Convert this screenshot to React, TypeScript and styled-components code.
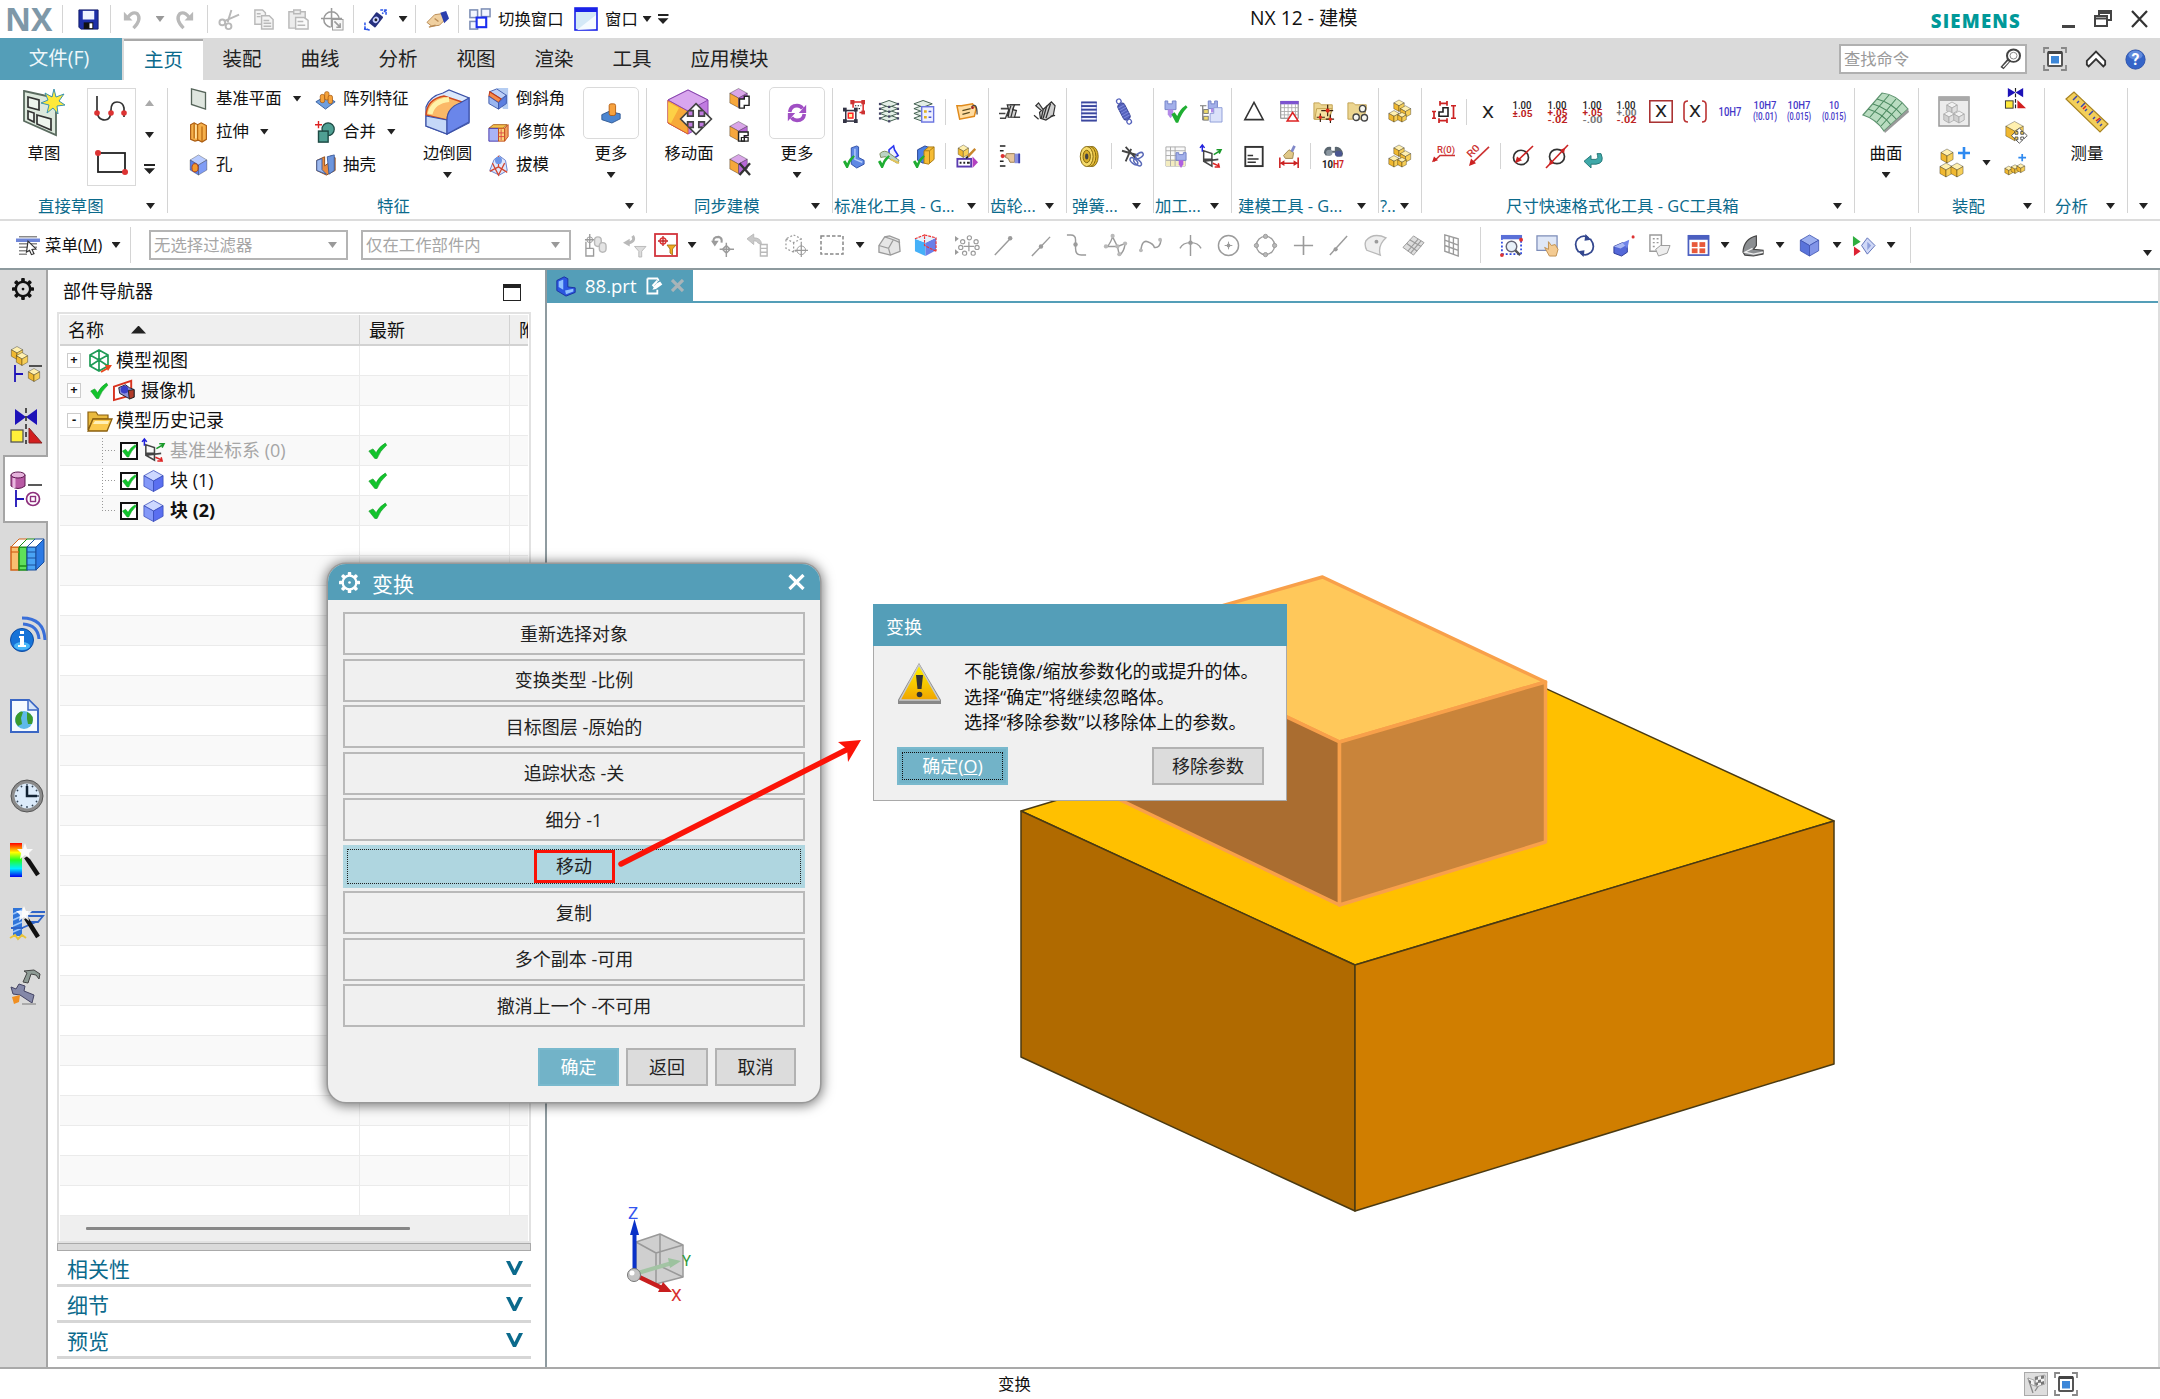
import React from 'react';
import styled, { createGlobalStyle, css } from 'styled-components';

const TEAL = '#549eb8';
const LINK = '#0b6a8c';

const Global = createGlobalStyle`
  * { box-sizing: border-box; }
  body { margin: 0; background: #fff; overflow: hidden; }
  svg { display: block; flex: none; }
  svg text { font-family: "Roboto", "Open Sans", sans-serif; }
`;

/* ---------- icon drawings ---------- */

const BLUE = ['#b9ccff', '#5b7fe8', '#7f9cf5'];
const GOLD = ['#fff0b0', '#f0b830', '#f7cf58'];
const PINK = ['#d9a6e8', '#f6a73c', '#b768d6'];
const GRAY = ['#f1f1f1', '#d0d0d0', '#e0e0e0'];
const cube = (cx: number, cy: number, r: number, c: string[], edge = '#00000066') => {
  const a = 0.87 * r;
  const b = r / 2;
  return (
    <g stroke={edge} strokeWidth={0.8} strokeLinejoin="round">
      <polygon fill={c[0]} points={`${cx},${cy - r} ${cx + a},${cy - b} ${cx},${cy} ${cx - a},${cy - b}`} />
      <polygon fill={c[1]} points={`${cx - a},${cy - b} ${cx},${cy} ${cx},${cy + r} ${cx - a},${cy + b}`} />
      <polygon fill={c[2]} points={`${cx + a},${cy - b} ${cx},${cy} ${cx},${cy + r} ${cx + a},${cy + b}`} />
    </g>
  );
};
const L = (d: string, stroke = '#222', w = 1.6, fill = 'none', extra: object = {}) => (
  <path d={d} stroke={stroke} strokeWidth={w} fill={fill} {...extra} />
);
const dot = (x: number, y: number, r = 2, f = '#d33') => <circle cx={x} cy={y} r={r} fill={f} />;
const tick = (x: number, y: number, s = 1) => (
  <path
    transform={`translate(${x} ${y}) scale(${s})`}
    d="M0 9 L3.5 7 L6.5 11 Q9 4 16 -0.500 L18 1.500 Q11 8 7.500 18 L5 18 Z"
    fill="#1fae32"
  />
);
const T = (x: number, y: number, s: number, fill: string, t: string, len?: number, weight = 500) => (
  <text x={x} y={y} fontSize={s} fill={fill} textAnchor="middle" fontWeight={weight} textLength={len} lengthAdjust="spacingAndGlyphs">
    {t}
  </text>
);
const moveCross = (x: number, y: number, s: number, f = '#fff') => (
  <path
    transform={`translate(${x} ${y}) scale(${s})`}
    d="M0 -11 L5 -6 H2 V-2 H6 V-5 L11 0 L6 5 V2 H2 V6 H5 L0 11 L-5 6 H-2 V2 H-6 V5 L-11 0 L-6 -5 V-2 H-2 V-6 H-5 Z"
    fill={f}
    stroke="#444"
    strokeWidth={1.2}
  />
);
const G = '#9b9b9b';
const LG = '#b9b9b9';
const tol = (a: string, ac: string, b?: string, bc = '#b22') => (
  <>
    {T(12, 9, 11, '#222', '1.00', 19)}
    {T(12.5, b ? 17 : 18, 9, ac, a, 20, 700)}
    {b && T(12.5, 24.5, 9, bc, b, 20, 700)}
  </>
);
const fit = (a: string, b: string) => (
  <>
    {T(12, 9, 12, '#4437c8', a, a.length > 2 ? 23 : 10)}
    {T(12, 21, 11, '#4437c8', b, 24)}
  </>
);

const icons: Record<string, React.ReactNode> = {
  save: (<><path d="M2 2h20v20H4L2 20z" fill="#1d2fa8" stroke="#111a66" /><rect x="6" y="3" width="12" height="9" fill="#eef3ff" /><rect x="7" y="15" width="10" height="7" fill="#111" /><rect x="13" y="16" width="3" height="5" fill="#fff" /></>),
  undo: (<>{L('M7 10Q12 3 17 6Q22 12 13 21', LG, 3.4)}<path d="M3 4v9h9z" fill={LG} /></>),
  redo: (<>{L('M17 10Q12 3 7 6Q2 12 11 21', LG, 3.4)}<path d="M21 4v9h-9z" fill={LG} /></>),
  cut: (<>{L('M14 2 L10 15 M22 7 L6 14', LG, 2)}<circle cx="4.500" cy="15" r="3" fill="none" stroke={LG} strokeWidth="2" /><circle cx="11" cy="19" r="3" fill="none" stroke={LG} strokeWidth="2" /></>),
  copy: (<g fill="#f4f4f4" stroke={LG} strokeWidth="1.500"><path d="M3 2h8l3 3v12H3z" /><path d="M10 8h8l4 4v10H10z" /><path d="M12 13h6M12 16h8M12 19h8M5 6h4M5 9h4" /></g>),
  paste: (<g fill="#ececec" stroke={LG} strokeWidth="1.500"><path d="M2 4h17v17H2z" /><path d="M7 2h7v4H7z" /><path d="M9 10h9l4 3v9H9z" fill="#fafafa" /><path d="M11 14h6M11 18h8" /></g>),
  movebox: (<>{L('M3 12a8 8 0 1 1 16 0M3 12a8 8 0 0 0 7 8M11 0v20M0 11h22', G, 1.6)}<rect x="12" y="12" width="11" height="11" fill="#f6f6f6" stroke={G} />{L('M14 14l6 6M20 16v4h-4', G, 1.6)}</>),
  sync: (<><g transform="rotate(38 12 12)"><rect x="8" y="5" width="9" height="14" rx="1" fill="#26307e" /><ellipse cx="12.500" cy="12" rx="3" ry="3.500" fill="#c9d0ff" /><circle cx="12.500" cy="12" r="1.500" fill="#222" /></g>{L('M1 15v6l4 2M0 22l6 1M17 2l6 0v6M23 2l-4 4', '#2b55e8', 1.6, 'none', { strokeDasharray: '3 1' })}</>),
  hand: (<><path d="M1 15l8-8 7-1 4 6-6 6-8 1z" fill="#f0d0a0" stroke="#b98b55" /><path d="M15 5l6-2 3 8-5 5z" fill="#2b3fae" />{L('M3 20l7-2M9 11l4 3', '#b98b55', 1.4)}</>),
  switchw: (<><g fill="#f2f6ff" stroke="#7d8eb5" strokeWidth="1.600"><rect x="2" y="2" width="8" height="8" /><rect x="14" y="1" width="9" height="8" /><rect x="2" y="14" width="8" height="8" /></g><rect x="9" y="10" width="10" height="10" fill="#fff" stroke="#1a2ef0" strokeWidth="2.200" /></>),
  windoww: (<><rect x="1" y="1" width="22" height="22" fill="#d4e9f7" stroke="#1a22e8" strokeWidth="1.600" /><rect x="1" y="1" width="22" height="4" fill="#1a22e8" /><path d="M3 23L22 8v14z" fill="#f5fbff" /></>),
  search: (<><circle cx="14.500" cy="8" r="6.500" fill="none" stroke="#444" strokeWidth="2" /><circle cx="14.500" cy="8" r="3.500" fill="none" stroke="#888" />{L('M10.500 12L3 21', '#444', 4)}{L('M9.500 14L4 20', '#fff', 1.4)}</>),
  full: (<>{L('M1 6V1h5M18 1h5v5M23 18v5h-5M6 23H1v-5', '#888', 1.8)}<rect x="5" y="5" width="14" height="14" rx="1" fill="#fff" stroke="#555" strokeWidth="2" /><path d="M5 5.500h14" stroke="#444" strokeWidth="3" /><rect x="8" y="9" width="8" height="7.500" fill="#3d87d8" /></>),
  up: (<path d="M2 14L12 4l10 10v4l-2 2-8-8-8 8-2-2z" fill="#fff" stroke="#333" strokeWidth="2" />),
  help: (<><circle cx="12" cy="12" r="11" fill="#3565c8" stroke="#2a4fa8" /><ellipse cx="12" cy="7" rx="8" ry="5" fill="#7fa3ea" opacity=".6" />{T(12, 18.5, 18, '#fff', '?', undefined, 700)}</>),
  sketch: (<><path d="M2 2L34 9V46L2 32z" fill="#dde9dd" stroke="#5a6b5f" strokeWidth="1.800" /><path d="M6 8l11 3v10L6 18zM6 22l6 2v9l-6-3zM15 26l14 4v11l-14-6z" fill="#eef5ee" stroke="#333" strokeWidth="1.700" /><path d="M32 0l2 8 8-3-5 7 6 4-8 1 1 8-5-6-6 5 2-8-8-2 7-3-3-7 7 4z" fill="#ffe93a" stroke="#3b93b0" strokeWidth="1" /></>),
  curveS: (<>{L('M2 1v14q0 10 8 10q6 0 6-10q0-8 6-8q6 0 7 6v9', '#333', 1.7)}{dot(2, 18, 2.8)}{dot(16, 18, 2.8)}{dot(29, 18, 2.8)}</>),
  rectS: (<><rect x="3" y="3" width="27" height="19" fill="none" stroke="#222" strokeWidth="1.800" />{dot(3, 3, 3)}{dot(30, 22, 3)}</>),
  plane: (<path d="M4 1L20 5V23L4 18z" fill="#dfe6df" stroke="#56655a" strokeWidth="1.500" />),
  extrude: (<><path d="M3 4l4-2 4 2 4-2 6 3v15l-5 3-4-2-4 1-5-2z" fill="#f6b04a" stroke="#a85a12" strokeWidth="1.300" />{L('M7 2v17M11 4v17M16 6v17', '#b8680f', 1.4)}{L('M9 4v15', '#ffe1a0', 2)}</>),
  hole: (<>{cube(12, 12, 11, BLUE)}<ellipse cx="8" cy="15" rx="3.500" ry="4.500" fill="#f39a2e" stroke="#b03a10" /></>),
  pattern: (<><path d="M1 15l11-6 11 6-11 8z" fill="#6f9fe0" stroke="#2f5a9c" />{[[6, 7], [11, 4], [15, 8]].map(([x, y], i) => (<rect key={i} x={x} y={y} width="5" height="9" rx="2" fill="#f5a23a" stroke="#a5570e" strokeWidth=".8" />))}</>),
  unite: (<>{L('M4 0v8M0 4h8', '#d22', 1.6)}<circle cx="15" cy="9" r="7" fill="#4f9f93" stroke="#1d4a44" strokeWidth="1.400" /><rect x="4" y="11" width="11" height="12" fill="#4f9f93" stroke="#1d4a44" strokeWidth="1.600" /></>),
  shell: (<><path d="M2 7l9-4v10l7-5V2l5 2v14l-10 5-11-5z" fill="#e98a3c" stroke="#8a4512" /><path d="M14 3l8-2v17l-6 4z" fill="#6d95dc" stroke="#38599c" /><path d="M2 7l6-2v12l5 5-11-4z" fill="#9eb9ee" stroke="#38599c" /></>),
  edgeblend: (<><path d="M1 18Q5 7 18 4L24 1L44 9V34L22 45L1 37z" fill="#dbe8fc" stroke="#3c52a8" strokeWidth="1.200" /><path d="M1 26Q2 10 19 7L40 14Q23 17 22 31z" fill="#fbb968" stroke="#d04a1e" strokeWidth="1.500" /><path d="M5 25Q8 12 24 10.500" stroke="#fff3a8" strokeWidth="5" fill="none" /><path d="M1 27L22 31V45L1 37z" fill="#c5d8f8" stroke="#3c52a8" strokeWidth="1.200" /><path d="M22 31Q22 19 35 14L44 9V33L22 45z" fill="#6a86ea" stroke="#3c52a8" strokeWidth="1.200" /></>),
  chamfer: (<><path d="M10 0h13v23h-6z" fill="#b5cdf2" /><path d="M2 4L10 1L21 8L15 12z" fill="#bcd0f8" stroke="#3a55a8" /><path d="M2 4l13 8-3 4L1 9z" fill="#f68b4a" stroke="#c03a18" strokeWidth="1.200" /><path d="M1 9l11 7v7L1 17z" fill="#9bb6f0" stroke="#3a55a8" /><path d="M12 16l9-8v9l-9 6z" fill="#5c7fe0" stroke="#3a55a8" /></>),
  trim: (<><path d="M1 8l5-4h16l-5 4z" fill="#f4c24c" stroke="#a85a12" /><path d="M1 8h11v14H1z" fill="#a9b4f5" stroke="#3d2ea8" /><path d="M12 8h7v14h-7z" fill="#fbd57a" stroke="#c04a18" /><path d="M19 8l4-4v13l-4 5z" fill="#f0a060" stroke="#c04a18" />{L('M15 9v12M12 13h7M12 17h7', '#d44', 1)}</>),
  draft: (<><path d="M7 6l6-4 7 5 2 11-9 5-11-5z" fill="#dfe7fb" stroke="#5c76c8" />{L('M12 2v12M12 14L2 19M12 14l10 6M5 10l7 13 7-13', '#d2452e', 1.4)}<circle cx="12" cy="7" r="4" fill="#6d95e8" /></>),
  moreA: (<><path d="M2 14l8-4 12 3v6l-9 5-11-4z" fill="#4d86d0" stroke="#2b5590" /><rect x="10" y="1" width="7" height="14" rx="2" fill="#f7a23e" stroke="#b35c10" /></>),
  moveface: (<><path d="M21 1L41 11V34L21 45L1 34V11z" fill="#c07be0" stroke="#8a48b0" /><path d="M1 11L21 22V45L1 34z" fill="#f7a93a" stroke="#e0602a" /><path d="M1 13L12 19L4 34L1 33z" fill="#ffe14c" opacity=".7" /><path d="M21 1L41 11L21 22L1 11z" fill="#d9a6ee" stroke="#8a48b0" />{moveCross(29, 30, 1.4)}</>),
  pullface: (<>{cube(11, 11, 10.5, PINK)}<path d="M12 12h5v-3h5v10h-5v3h-5z" fill="#fff" stroke="#222" strokeWidth="1.500" /></>),
  offsetface: (<>{cube(11, 11, 10.5, PINK)}<path d="M11 12h10v4h-4v6h-6z" fill="#fff" stroke="#222" strokeWidth="1.500" />{L('M14 18h7v4h-7z', '#222', 1.3)}</>),
  delface: (<>{cube(11, 11, 10.5, PINK)}{L('M12 10l11 13M23 10L12 23', '#333', 2.4)}</>),
  cycle: (<>{L('M4 11Q5 4 12 4q4 0 6 3M20 13q-1 7-8 7-4 0-6-3', '#a04fc4', 4)}<path d="M22 3v9h-8zM2 21v-9h8z" fill="#a04fc4" /></>),
  attr: (<><path d="M11 2h11v11h-4M11 2v6" fill="none" stroke="#d22" strokeWidth="1.600" />{L('M13 6h7M14 9h6', '#222', 1.3, 'none', { strokeDasharray: '1.500 1.500' })}<rect x="3" y="11" width="11" height="11" fill="#fff" stroke="#334" strokeWidth="1.600" />{[[0, 8], [0, 20], [12, 20], [12, 8]].map(([x, y], i) => (<rect key={i} x={x} y={y} width="4" height="4" fill="#334" />))}<rect x="8" y="0" width="4.500" height="4.500" fill="#c33" /><rect x="20" y="0" width="4" height="4.500" fill="#c33" /><rect x="20" y="11" width="4" height="4" fill="#c33" /><rect x="5.800" y="13.800" width="5" height="5" fill="#fff3a0" stroke="#f22" strokeWidth="1.600" /></>),
  layers: (<g fill="#e3eee6" stroke="#3c5a4a" strokeWidth="1">{[18, 13, 8, 3].map((y) => (<g key={y}><path d={`M2 ${y + 1}L12 ${y - 2.5}L22 ${y + 1}L12 ${y + 4.5}z`} /><g fill="#446" stroke="none"><rect x="1" y={y} width="2.400" height="2.400" /><rect x="20.600" y={y} width="2.400" height="2.400" /><rect x="11" y={y + 3} width="2.400" height="2.400" /></g></g>))}</g>),
  layers2: (<><g fill="#e3eee6" stroke="#3c5a4a" strokeWidth="1">{[18, 13, 8, 3].map((y) => (<path key={y} d={`M1 ${y + 1}L11 ${y - 2.5}L21 ${y + 1}L11 ${y + 4.5}z`} />))}</g><rect x="9.500" y="7" width="13" height="16" fill="#eef0ff" stroke="#6a74e0" strokeWidth="1.500" />{L('M12 12h3M12 18h3', '#e0b020', 2.600)}{L('M17 12h3M17 18h3', '#4a57d0', 1.500)}</>),
  tag: (<><path d="M1 6l5 0 12-2 4 5-2 8-16 3z" fill="#ffdca0" stroke="#e08a1c" strokeWidth="1.600" />{L('M7 11l9-2M7 15l8-2', '#5a4a20', 1.4)}{L('M17 7q6-5 6 8', '#444', 1.4)}{dot(18, 8, 1.5, '#a22')}</>),
  okA: (<><path d="M9 3l6-2 2 1v11l6 3v4l-8 4-6-4z" fill="#5f88e4" stroke="#2f4fa8" /><path d="M13 4v11l8 3" stroke="#b9cffa" fill="none" strokeWidth="1.500" />{tick(0, 11, 0.72)}</>),
  okB: (<><path d="M12 5l5-4 1 4 4 6-5 3-5-4z" fill="#f0f2ff" stroke="#2a36f0" strokeWidth="1.700" /><path d="M2 9q5-5 11 0l10 7-2 3-9-5q-4-3-9-1z" fill="#bcd3c4" stroke="#7a8a5a" />{L('M14 15l9 4', '#e4c45a', 2)}{tick(0, 11, 0.72)}</>),
  okC: (<><path d="M5 5l8-4 6 2v12l-8 4-6-3z" fill="#4a80e4" stroke="#25408f" /><path d="M12 6l5-4h6v13l-6 5-5-1z" fill="#f6bc34" stroke="#a87a14" /><path d="M12 6h6v13M18 6l5-4" fill="none" stroke="#a87a14" />{tick(0, 11, 0.72)}</>),
  okD: (<>{cube(8, 6.5, 6.5, GOLD)}<rect x="1.500" y="14.500" width="15" height="8" fill="#fff" stroke="#5a3bb0" strokeWidth="2" />{L('M4 18.500h2M8 18.500h2M12 18.500h3', '#222', 2)}<path d="M18 12l6 6-6 6z" fill="#b33fc0" />{L('M13 12l8-8', '#c8862a', 2.600)}{L('M11 14l2-2', '#222', 2)}</>),
  gearA: (<>{L('M0 14h7M12 5l11 0M2 9h9M16 18h7M1 19l6 0 6-14', '#444', 1.6)}<path d="M9 5h8l-2 5 4 1-2 7h-7l1-6z" fill="#d2d2d2" stroke="#333" strokeWidth="1.300" />{L('M13 6l-4 11M16 7l-3 11', '#333', 1.300)}</>),
  gearB: (<><path d="M2 6l3-3 5 7 9-8 4 4-2 10-8 5-6-2-1-6 2-2z" fill="#cfcfcf" stroke="#333" strokeWidth="1.300" />{L('M10 10l-2 9M14 6l-4 13M18 4l-5 15M0 16l5 4M18 17l5-1', '#333', 1.400)}</>),
  gearC: (<>{L('M1 1h6M1 6h4M1 17h4M1 22h6', '#222', 1.6)}{L('M2 11.500h6', '#c66', 1.500)}{dot(4, 11.5, 2.2)}<path d="M8 9h9v9h-5l-2-4-3-1z" fill="#e8c69c" stroke="#9a7a4c" /><path d="M17 9h6v10h-6z" fill="#8a92e0" />{L('M22 9v10', '#3b3fae', 2)}</>),
  spring: (<><rect x="4" y="2" width="16" height="20" fill="#f3f4ff" />{L('M4 2v20M20 2v20', '#8d96d8', 1.2)}<g stroke="#3b479e" strokeWidth="2">{[2.5, 6.3, 10.1, 13.9, 17.7, 21.5].map((y) => (<path key={y} d={`M3.500 ${y}h17`} />))}</g></>),
  spring2: (<><g transform="rotate(-28 12 12)"><rect x="8" y="3" width="8" height="18" rx="3" fill="#5562bc" stroke="#333f90" />{L('M8 6h8M8 9h8M8 12h8M8 15h8M8 18h8', '#7d89dc', 1)}<circle cx="12" cy="0" r="2.500" fill="none" stroke="#5562bc" strokeWidth="1.400" /><circle cx="12" cy="24" r="2.500" fill="none" stroke="#5562bc" strokeWidth="1.400" /></g></>),
  disc: (<><ellipse cx="15.500" cy="12" rx="6.500" ry="10.500" fill="#dfb42a" stroke="#7d620c" /><ellipse cx="12.500" cy="12" rx="7" ry="10.500" fill="#ecc545" stroke="#7d620c" /><ellipse cx="9.500" cy="12" rx="7" ry="10.500" fill="#f6da68" stroke="#7d620c" /><ellipse cx="9.500" cy="12" rx="4" ry="6.500" fill="#d7ad2a" stroke="#7d620c" /><ellipse cx="9.500" cy="12" rx="1.800" ry="3.200" fill="#444" /></>),
  springcut: (<>{L('M4 2l12 13M0 6l18 5M10 4L4 17', '#444', 2)}<g fill="none" stroke="#5a6ab8" strokeWidth="1.600"><ellipse cx="19" cy="11" rx="4.500" ry="2.500" transform="rotate(-30 19 11)" /><ellipse cx="17" cy="18" rx="2.500" ry="5" transform="rotate(-50 17 18)" /><ellipse cx="13" cy="17" rx="2.500" ry="5" transform="rotate(-50 13 17)" /></g></>),
  mach: (<><path d="M0 1h3v3h5V1h4v9H0z" fill="#a3b0ea" stroke="#7483c8" /><path d="M3 10h6v5l-3 4-3-4z" fill="#b48ae8" />{tick(7, 6, 0.98)}</>),
  mach2: (<><path d="M9 1h3v3h4V1h3v8H9z" fill="#a3b0ea" stroke="#7483c8" /><path d="M12 9h5v4h-5z" fill="#b48ae8" /><path d="M15 8h9v15H11V14h4z" fill="#dbe2fa" stroke="#8d9cd8" />{L('M0 6h7M3 6v15M3 20h4', '#777', 1.3)}<rect x="4" y="10" width="5" height="4" fill="#f0dc6a" stroke="#777" /><rect x="4" y="17" width="5" height="4" fill="#f0dc6a" stroke="#777" /></>),
  mach3: (<><path d="M1 2h21v20H1z" fill="#fafafa" stroke="#aaa" /><path d="M1 15h21v7H1z" fill="#f3ecc0" />{L('M1 6h21M1 11h21M1 16h21M6 2v20M11 2v20', '#aaa', 1)}<path d="M12 8h3v2h5V8h3v8H12z" fill="#a3b0ea" stroke="#7483c8" /><path d="M15 16h5v4l-2.500 4-2.500-4z" fill="#b060e0" /></>),
  csys: (<>{L('M4 6v11l9 5V9zM13 15l-9 0M4 17l16-2', '#444', 1.6)}{L('M2.500 7V1M0 3l2.500-3 2.500 3', '#22d', 1.6)}{L('M15 10l7-4M18 5h5l-2 4', '#1a9a2a', 1.6)}{L('M14 19l7 3M20 19l1 4h-5', '#d22', 1.6)}</>),
  tri: L('M12 2.500L22 20.500H2z', '#333', 1.7),
  sheet: (<><rect x="3" y="1.500" width="19" height="17.500" fill="#fff" stroke="#777" /><rect x="2.500" y="1" width="20" height="3.500" fill="#7b52d0" />{L('M3 8h19M3 12h19M3 15.500h19M7 4v15M11 4v15M15 4v15M19 4v15', '#aaa', 0.9)}<path d="M16 13l6 9H10z" fill="#fff" stroke="#d22" strokeWidth="1.600" /></>),
  folderA: (<><path d="M1 3h6l2 2h12v4l-3 11H1z" fill="#ecd590" stroke="#c0a050" /><path d="M4 9h17l-4 11H2z" fill="#f6e2a0" stroke="#c0a050" />{L('M16 5v12M9 11h13M8 14v9M4 18h9M19 15v9M14 20h9', '#3a2010', 1.3)}{dot(16, 11, 2.2, '#e02a1a')}{dot(8, 18, 1.8, '#e02a1a')}{dot(19, 20, 1.8, '#e02a1a')}</>),
  folderB: (<><path d="M1 3h6l2 2h12v4l-3 11H1z" fill="#ecd590" stroke="#c0a050" /><g fill="#f6f6f0" stroke="#444" strokeWidth="1.500"><circle cx="17" cy="9" r="3.400" /><circle cx="10" cy="18" r="3.400" /><circle cx="19" cy="18.500" r="3.400" /></g></>),
  note: (<><rect x="2.500" y="2" width="19" height="20" fill="#fff" stroke="#333" strokeWidth="2" />{L('M5 11h6M5 14.500h12M5 18h9', '#333', 1.600)}</>),
  brush: (<>{L('M2 13v11M22 13v11M3 19h18', '#c22', 1.7)}<path d="M2 19l5-3v6zM22 19l-5-3v6z" fill="#c22" /><path d="M6 11l6-6 5 3-1 6-8 0z" fill="#e0c888" stroke="#a08850" />{L('M15 7l3-6', '#8088c8', 3)}</>),
  bino: (<><path d="M2 8q1-7 8-6v4h4V2q7-1 9 7l-1 3h-6l-1-4h-4l-2 3H4z" fill="#5a6670" /><ellipse cx="8" cy="8" rx="3.500" ry="3" fill="#8a96a0" /><ellipse cx="18" cy="9" rx="4" ry="3" fill="#4a5690" />{T(6, 24, 10.5, '#222', '10', 12, 700)}{T(18, 24, 10.5, '#c22', 'H7', 12, 700)}</>),
  cubes: (<>{cube(11, 6, 6, GOLD)}{cube(17.500, 12, 6, GOLD)}{cube(6, 17, 6, GOLD)}{cube(14, 18, 5, GOLD)}</>),
  dimA: (<>{L('M8 1v5M15 1v5M8 3.500h7M7 19v5M15 19v5M7 21.500h8M0 12h4M0 19h4M2 12v7M19 6h5M19 19h5M21.500 6v13', '#c22', 1.7)}{L('M7 17V12.500h4V8h5v9z', '#222', 1.6)}</>),
  x: T(12, 18.500, 18, '#222', 'X', 12, 400),
  xbox: (<><rect x=".8" y=".8" width="22.400" height="22.400" fill="none" stroke="#a33" strokeWidth="1.600" />{T(12, 18, 17.5, '#222', 'X', 12, 400)}</>),
  xpar: (<>{L('M5 1Q1 1 1 5v14q0 4 4 4M19 1q4 0 4 4v14q0 4-4 4', '#b33', 1.6)}{T(12, 18, 17.5, '#222', 'X', 12, 400)}</>),
  t1: tol('±.05', '#b22'),
  t2: tol('+.05', '#b22', '-.02'),
  t3: tol('+.05', '#b22', '-.00', '#777'),
  t4: tol('+.00', '#777', '-.02'),
  h0: T(12, 17, 13, '#4437c8', '10H7', 23),
  h1: fit('10H7', '(!0.01)'),
  h2: fit('10H7', '(0.015)'),
  h3: fit('10', '(0.015)'),
  rA: (<>{T(14, 8, 9.500, '#c33', 'R(0)', 18)}{L('M23 11H8L2 17', '#c33', 1.6)}<path d="M0 18l2-6 4 4z" fill="#c22" /></>),
  rB: (<>{L('M22 2L4 20', '#c33', 1.6)}<path d="M2 22l2-8 5 5z" fill="#c22" /><g transform="rotate(-45 10 10)">{T(10, 8, 10, '#c33', 'R0', 14)}</g></>),
  diaA: (<><circle cx="11" cy="13" r="7.500" fill="none" stroke="#333" strokeWidth="1.700" />{L('M23 1L7 17', '#c22', 1.6)}<path d="M5 19l2-7 5 4z" fill="#c22" /></>),
  diaB: (<><circle cx="12" cy="12" r="7.500" fill="none" stroke="#333" strokeWidth="1.700" />{L('M23 0L1 24', '#c22', 1.6)}<path d="M4 21l1-6 4 4zM20 3l-1 6-4-4z" fill="#c22" /></>),
  enter: (<path d="M4 17l7-6v4h5q3-1 1-6h4q4 10-5 11h-5v4z" fill="#3fa9a9" stroke="#267878" />),
  surface: (<><path d="M1 24L20 2Q34 3 46 18L22 40Q14 28 1 24z" fill="#b9dcc0" stroke="#5f9470" strokeWidth="1.200" />{L('M6 18Q20 22 29 34M11 13Q25 17 35 29M15 8Q30 12 40 24M8 26L27 4M15 31L34 8M19 35L40 12', '#4c8a60', 1.1)}<path d="M46 18L22 40l1 2L47 21z" fill="#999" /></>),
  asmBox: (<><rect x="1" y="1" width="30" height="29" fill="#ececec" stroke="#999" strokeWidth="1.500" /><rect x="1" y="1" width="30" height="4" fill="#a9a9a9" />{cube(14, 12, 6, GRAY, '#aaa')}{cube(11, 21, 6, GRAY, '#aaa')}{cube(21, 21, 6, GRAY, '#aaa')}</>),
  asmAdd: (<>{cube(9, 9, 7, GOLD)}{cube(8, 23, 7, GOLD)}{cube(19, 23, 7, GOLD)}{L('M26 0v12M20 6h12', '#2f8af0', 2.600)}</>),
  mirror: (<><path d="M4 0l8 5-8 5zM20 0l-8 5 8 5z" fill="#1d12b8" />{L('M12 0v24', '#222', 1.2, 'none', { strokeDasharray: '4 2' })}<rect x="1.500" y="14" width="8" height="8" fill="#ffe93a" stroke="#333" /><path d="M14 13l9 9h-9z" fill="#d21f1f" /></>),
  moveComp: (<>{cube(11, 11, 10.500, GOLD)}{moveCross(16, 16, 0.75)}</>),
  patComp: (<>{cube(5, 18, 4.8, GOLD)}{cube(11.500, 16.500, 4.8, GOLD)}{cube(17.500, 15.500, 4.8, GOLD)}{L('M19 0v8M15 4h8', '#2f8af0', 1.800)}</>),
  ruler: (<><path d="M1 8L9 1L43 33L35 41z" fill="#f3cf5a" stroke="#a98422" strokeWidth="1.200" />{L('M8 9l4-4M12 12l2-2M16 16l4-4M20 20l2-2M24 24l4-4M28 28l2-2M32 32l4-4M35 35l2-2', '#3b46b0', 1.500)}{L('M18 18l3-3M31 30l4-3', '#d22', 1.500)}</>),
  menu: (<>{L('M3 2h18M3 10h18M3 14h18M3 18h12M3 22h8', '#8a8a8a', 1.600)}<rect x="0" y="4" width="24" height="4" fill="#6f86d8" /><path d="M12 7l8 9-4 .5 2 5-2.500 1-2-5-3 2z" fill="#fff" stroke="#333" strokeWidth="1.200" /></>),
  gA: (<>{L('M2 8v15h8v-8M2 15h8M6 0v15M1 6h10', G, 1.4)}<circle cx="6" cy="6" r="3" fill="none" stroke={G} /><rect x="11" y="3" width="7" height="10" rx="3.500" fill="#e4e4e4" stroke={LG} strokeWidth="1.500" /><rect x="16" y="9" width="7" height="10" rx="3.500" fill="#e4e4e4" stroke={LG} strokeWidth="1.500" /></>),
  gB: (<>{L('M10 2q4 6-6 8', LG, 3)}<path d="M0 9l7-4v8z" fill={LG} /><path d="M12 13h12l-4.500 5v6h-3v-6z" fill="#ddd" stroke={LG} /></>),
  redfilter: (<><rect x="1" y="1" width="22" height="22" fill="#fff" stroke="#d2343c" strokeWidth="1.800" />{L('M9 3v10M4 8h10', '#b22', 1.300)}<circle cx="9" cy="8" r="3" fill="none" stroke="#d33" strokeWidth="1.400" /><path d="M13 12h9l-3.500 4v6l-2.500-2v-4z" fill="#f0a91f" stroke="#9c6c10" strokeWidth=".8" /></>),
  gC: (<>{L('M3 9Q1 3 8 3q4 1 3 6', G, 2.2)}<path d="M0 7h8l-4 6z" fill={G} />{L('M16 9v15M9 16h15M16 12l4 4-4 4-4-4z', G, 1.500)}</>),
  gD: (<><path d="M0 5l7-5v4q8 0 8 7l-4-2q0-2-4-2v4z" fill="#c9c9c9" stroke={LG} />{L('M14 11h7v12h-7zM14 15h7M14 19h7', LG, 1.500)}</>),
  gE: (<>{L('M9 1l8 4v10l-8 4-8-4V5zM1 5l8 4 8-4M9 9v10', G, 1.300, 'none', { strokeDasharray: '2 2' })}<circle cx="17" cy="17" r="4.500" fill="#fff" stroke={G} />{L('M17 10v14M10 17h14', G, 1.300)}</>),
  gF: L('M1 3h22v18H1z', '#888', 1.500, 'none', { strokeDasharray: '3.500 2' }),
  gG: (<><path d="M1 12l6-9 5-1 10 4 1 12-10 4L1 19z" fill="#e6e6e6" stroke={G} strokeWidth="1.400" />{L('M1 12l10 3 5-9M11 15l2 7M7 3l9 3 7 3', G, 1.300)}</>),
  cubeBlue: (<><path d="M1 5l11 4v14L1 18z" fill="#45b0f8" /><path d="M12 9l11-5v13l-11 6z" fill="#6b7fe8" /><path d="M1 5l10-4 12 3-11 5z" fill="#e6f2fc" />{L('M1 5l10-4v11l12 6M11 1l12 3v14', '#e33', 1.200, 'none', { strokeDasharray: '3 1' })}</>),
  gH: (<><path d="M0 2l4 3-4 3zM0 16l4 3-4 3z" fill={G} />{[[15, 4], [8, 8], [22, 8], [6, 14], [23, 14], [10, 20], [19, 20]].map(([x, y], i) => (<circle key={i} cx={x} cy={y} r="2.200" fill="none" stroke={G} strokeWidth="1.200" />))}{L('M9 13h11M14.500 8v10', G, 1.300)}</>),
  l1: (<>{L('M4 22L19 6', G, 1.500)}{dot(20, 4.5, 2.3, G)}</>),
  l2: (<>{L('M3 23L22 3', G, 1.500)}{dot(12.5, 13, 2.3, G)}</>),
  l3: (<>{L('M2 1h4q5 0 5 5v9q0 7 6 7h5', G, 1.500)}{dot(11, 11, 2.3, G)}</>),
  l4: (<>{L('M1 14q4 0 8-11l5 10H3M14 13l2 9q5-3 6-12l-8 3', G, 1.500)}{[[2, 13], [9, 2], [14, 13], [16, 21], [22, 10]].map(([x, y]) => (<circle key={x} cx={x} cy={y} r="2.200" fill={LG} />))}</>),
  l5: (<>{L('M2 17Q3 6 9 8t7 6q6 1 7-8', G, 1.600)}{dot(2, 17, 2, LG)}{dot(22, 6, 2, LG)}</>),
  l6: (<>{L('M1 15Q4 9 12 9t11 6M12 1v22', G, 1.500)}{dot(12, 9, 2.3, G)}</>),
  l7: (<><circle cx="12" cy="12" r="10.500" fill="none" stroke={G} strokeWidth="1.500" />{dot(12, 12, 2, G)}{L('M8 12h8M12 8v8', G, 1)}</>),
  l8: (<><circle cx="12" cy="12" r="9.500" fill="none" stroke={G} strokeWidth="1.400" />{[[12, 2.5], [12, 21.5], [2.5, 12], [21.5, 12]].map(([x, y]) => (<circle key={`${x}${y}`} cx={x} cy={y} r="2.200" fill={LG} stroke={G} />))}</>),
  l9: L('M12 2v20M2 12h20', G, 1.700),
  l10: (<>{L('M3 22L21 2', G, 1.500)}{dot(9, 16, 2.200, G)}</>),
  l11: (<><path d="M2 7Q10-2 23 4Q14 12 17 22L3 17Q0 12 2 7z" fill="#eee" stroke={LG} strokeWidth="1.400" />{dot(13, 8, 2, G)}</>),
  l12: (<><path d="M1 14L12 2l11 7-11 13z" fill="#ddd" stroke={G} />{L('M5 10l11 8M8 6l12 7M6 18L17 5M9 20L20 7', G, 1.200)}</>),
  l13: (<>{L('M5 1L19 5V23L5 18zM9.500 2v18M14 4v18M5 6.500l14 5M5 12l14 5', G, 1.400)}</>),
  vzoom: (<>{L('M2 4v18M2 21h19M22 21V4', '#2a46e0', 1.8, 'none', { strokeDasharray: '2 2' })}<rect x="1" y="1" width="22" height="4.500" fill="#5a70d8" /><circle cx="12" cy="13" r="5.500" fill="#e8f0f8" stroke="#667" strokeWidth="1.500" />{L('M16 17l5 5', '#555', 2.500)}{dot(22, 6, 2)}{dot(2, 22, 2)}</>),
  vpan: (<><path d="M1 2h21v15H1z" fill="#dfe7f7" stroke="#7c8cb8" strokeWidth="1.300" /><path d="M9 14l4 2V8l3 4 4-1 3 5-2 7h-7z" fill="#f4cb92" stroke="#c09050" /></>),
  vrot: (<>{L('M6 19Q0 11 5 5q6-5 11-1M18 5q6 8 1 14-6 5-11 1', '#33478f', 1.800)}<path d="M13 0l6 6-7 1zM11 24l-6-6 7-1z" fill="#33478f" /></>),
  vpen: (<><path d="M2 13l9-4 5 2v8l-6 4-8-3z" fill="#5468d8" stroke="#2f3d9a" /><path d="M2 13l9-4 5 2-7 4z" fill="#a9b8f5" /><path d="M11 9l7-3-1 5-1 4z" fill="#6f83e8" />{dot(22, 3, 1.600)}</>),
  vsheet: (<>{L('M2 1h12v17H2z', G, 1.500)}{L('M5 5h2M9 5h2M5 9h2M9 9h2M5 13h2', G, 1.500)}<path d="M8 16l5-4h10l-3 8-9 3z" fill="#eee" stroke={G} /></>),
  vwin: (<><rect x="1.500" y="2" width="21" height="20" fill="#fff" stroke="#4b5fc0" strokeWidth="1.800" /><rect x="1" y="1" width="22" height="5" fill="#4b5fc0" />{[[5, 8.5], [13, 8.5], [5, 15], [13, 15]].map(([x, y]) => (<rect key={`${x}-${y}`} x={x} y={y} width="6" height="5" fill="#e8593a" />))}</>),
  vsec: (<><path d="M1 19Q2 5 15 2v10l-3 4 10 1v4l-10 2-9-1z" fill="#8c8f92" stroke="#444" strokeWidth="1.200" />{L('M11 15l-8 4 9 2 10-2', '#eee', 1.300)}</>),
  vcube: cube(12, 12, 11, ['#9db0ef', '#5a74da', '#8295e8'], '#3a4fae'),
  vclip: (<><path d="M1 2l8 6-8 5z" fill="#2fae3f" /><path d="M2 13l7 5-7 5z" fill="#d23" /><path d="M16 4l8 8-8 9-6-9z" fill="#cfd8f7" stroke="#5d70b8" /><path d="M16 8l4 4-4 5z" fill="#8fa0dc" /></>),
  gear: (<><circle cx="12" cy="12" r="7.800" fill="none" stroke="currentColor" strokeWidth="2.600" />{Array.from({ length: 8 }, (_, i) => (<rect key={i} x="10" y="0" width="4" height="4.500" rx="1" fill="currentColor" transform={`rotate(${i * 45} 12 12)`} />))}<circle cx="12" cy="12" r="1.500" fill="currentColor" /></>),
  navAsm: (<>{cube(7, 7, 6.5, GOLD)}{cube(12, 13, 6.5, GOLD)}{L('M19 20h13', '#222', 1.500)}{L('M5 19v17M5 28h8', '#1d12b8', 1.800)}{cube(24, 29, 6.5, GOLD)}</>),
  navCon: (<><path d="M5 1l11 8-11 8zM27 1l-11 8 11 8z" fill="#1d12b8" />{L('M16 0v36', '#222', 1.500, 'none', { strokeDasharray: '5 3' })}<rect x="1" y="22" width="12" height="12" fill="#ffef3a" stroke="#555" strokeWidth="1.300" /><path d="M19 20l13 15H19z" fill="#d21f1f" stroke="#822" /></>),
  navPart: (<><path d="M1 4v11q7 5 14 0V4z" fill="#b85aa4" stroke="#5e1850" /><path d="M4 7v10" stroke="#e9b9df" strokeWidth="3" /><ellipse cx="8" cy="4" rx="7" ry="3" fill="#e6b3dc" stroke="#5e1850" />{L('M18 14h14', '#222', 1.500)}{L('M6 19v17M6 28h8', '#1d12b8', 1.800)}<circle cx="23" cy="28" r="6.500" fill="none" stroke="#8d2f7c" strokeWidth="1.700" /><rect x="20.500" y="25.500" width="5" height="5" fill="none" stroke="#8d2f7c" strokeWidth="1.400" /></>),
  books: (<><path d="M1 9h8v23H1z" fill="#f9bf70" stroke="#d2641a" strokeWidth="1.500" /><path d="M9 9h8v23H9z" fill="#5fe05a" stroke="#1b8d18" strokeWidth="1.500" /><path d="M17 9h9v23h-9z" fill="#4aa4f4" stroke="#1b4f9c" strokeWidth="1.200" /><path d="M1 9L9 1h8L9 9z" fill="#fff" stroke="#d2641a" /><path d="M9 9l8-8h8l-8 8z" fill="#fff" stroke="#1b8d18" /><path d="M17 9l8-8h9l-8 8z" fill="#fff" stroke="#1b4f9c" /><path d="M26 9l8-8v23l-8 8z" fill="#2d7ae4" stroke="#1b4f9c" />{L('M1 14h8', '#d2641a', 1.200)}{L('M9 28h8', '#1b8d18', 1.500)}{L('M17 14h9M17 20h9M17 27h9', '#1b4f9c', 1.200)}</>),
  info: (<><circle cx="12" cy="24" r="11.500" fill="#1673d8" stroke="#0f4ba0" /><ellipse cx="12" cy="30" rx="8" ry="4" fill="#4ab6f7" /><path d="M9 20h5v9h2v2H8v-2h2v-7H9zM10 15h4v3h-4z" fill="#fff" />{L('M12 2q22 0 23 22M13 8q15 1 16 15', '#3a6fd8', 3)}</>),
  page: (<><path d="M1 1h18l9 9v23H1z" fill="#f5faff" stroke="#3b67c4" strokeWidth="2" /><path d="M18 1v10h10" fill="#d5e3f7" stroke="#3b67c4" strokeWidth="1.500" /><circle cx="14" cy="21" r="9" fill="#5eb9ea" /><path d="M6 17q4-6 7-4l-2 6 1 6-4 2q-4-4-2-10zM17 13q8 3 5 12l-4 0-1-5z" fill="#3a9a2e" /></>),
  clock: (<><circle cx="17" cy="17" r="16" fill="#8b8b8b" stroke="#555" /><circle cx="17" cy="17" r="12.500" fill="#dcebfa" />{L('M17 7v10h10', '#123', 2.500)}{Array.from({ length: 12 }, (_, i) => (<circle key={i} cx="17" cy="6" r=".9" fill="#345" transform={`rotate(${i * 30} 17 17)`} />))}</>),
  rainbow: (<><defs><linearGradient id="rb" x1="0" y1="0" x2="0" y2="1"><stop offset="0" stopColor="#f00" /><stop offset=".28" stopColor="#ff0" /><stop offset=".5" stopColor="#2f2" /><stop offset=".75" stopColor="#0ef" /><stop offset="1" stopColor="#00e" /></linearGradient></defs><rect x="0" y="0" width="12" height="34" fill="url(#rb)" />{L('M16 14l12 18', '#111', 4.500)}<path d="M15 0l2 6 6 0-4 4 1 6-5-4-5 4 1-6-4-4 6 0z" fill="#fff" opacity=".9" /></>),
  wandK: (<><rect x="3" y="2" width="9" height="28" fill="#2f74d8" />{L('M3 8l9-4M3 14l9-4M3 20l9-4M3 26l9-4', '#9cc8ff', 1.500)}{L('M0 32l5-3 3 4 4-4 4 3', '#e8c43a', 2)}{L('M18 6h17M16 10h17l-5 6H17M12 22l14-6M1 22h12', '#2f64c8', 1.8)}{L('M16 12l12 19', '#111', 4.500)}<path d="M14 0l2 5 6 0-4 4 1 6-5-4-5 4 1-6-4-4 6 0z" fill="#fff" opacity=".9" /></>),
  tools: (<><path d="M14 2l10-1 6 4-1 5-3-4-5-1-3 9-5-1 4-9z" fill="#8d9a94" stroke="#444" /><path d="M1 18l5 2 3-5 6 2-1 5 10 4-2 8-6-4-6-4-7-1z" fill="#8488a8" stroke="#444464" /><path d="M2 28l8-2-1 7-5 2z" fill="#f08f22" />{L('M12 35h14', '#aaa', 2)}</>),
  tView: (<>{L('M12 1l9 5v11l-9 5-9-5V6zM3 6l9 5 9-5M12 1v21M3 17l9-6 9 6', '#1f9c56', 1.700)}{L('M14 23l7-4', '#e8481e', 2)}<path d="M18 16l7 0-4 6z" fill="#e8481e" /></>),
  tCam: (<><path d="M1 8l18-6v15L1 22z" fill="#fff" stroke="#d8321e" strokeWidth="2" /><path d="M6 9l7-3 4 3 5 2v8l-6 1-9-5z" fill="#8a8fd8" stroke="#223" /><circle cx="12" cy="11" r="4" fill="#3a3fc8" /><path d="M16 12l6-1v8l-5 2z" fill="#b23a28" stroke="#222" /></>),
  folder: (<><path d="M1 3h8l2 3h10v4H6L1 21z" fill="#e9b93e" stroke="#8a5f0e" strokeWidth="1.200" /><path d="M6 10h19l-5 12H1z" fill="#fbc94e" stroke="#8a5f0e" strokeWidth="1.300" /><path d="M8 12h14l-1 3H6z" fill="#fff0b8" /></>),
  block: cube(12, 12, 11.5, ['#cdd8ff', '#8398f8', '#5a6ff0'], '#3549b8'),
  check: (<path d="M2 12l4.500-2.500L10 14Q13 7 20 2.500l1.500 2.500Q14 12 11 21H8.500z" fill="#12c42c" stroke="#0f9a22" strokeWidth=".7" />),
  docPart: (<><path d="M2 6l8-4 4 2v9l8 1v5l-10 4-10-6z" fill="#2b57e0" stroke="#1a2ea0" /><path d="M4 7l5-2v11l-5-3zM11 17l9-2v3l-8 3z" fill="#8fc0ff" /></>),
  docEdit: (<><path d="M2 2h14l2 3M2 2v20h14v-5M16 5l-6 6 4 4" fill="none" stroke="#fff" strokeWidth="2.600" /><path d="M14 9l6-3 3 4-9 6-5 1z" fill="#fff" /></>),
  warn: (<><defs><linearGradient id="wg" x1="0" y1="0" x2="0" y2="1"><stop offset="0" stopColor="#fff200" /><stop offset="1" stopColor="#f0a400" /></linearGradient></defs><path d="M22 1L44 38v4H1v-4z" fill="#888" /><path d="M22 3L42 38H3z" fill="url(#wg)" stroke="#c9c9c9" strokeWidth="1.500" /><path d="M19 13h7l-1.500 14h-4z" fill="#333" /><circle cx="22.500" cy="32.500" r="2.800" fill="#333" /></>),
  flag: (<><rect x=".5" y=".5" width="23" height="23" fill="#dedede" stroke="#aaa" />{L('M4 6l5 15M11 19L21 4', '#888', 1.300)}<path d="M4 6l6 2 1 6-5-2zM11 5l10-2v9l-9 3z" fill="#f2f2f2" stroke="#999" strokeWidth=".8" /><path d="M11 5l3-.5v3l-3 .5zM17 4l3-.5v3l-3 .5zM14 8l3-.5v3l-3 .5zM11 11l3-1v3l-2 1zM17 10l3-1v3l-3 1zM5 8l2 1v3l-2-1z" fill="#777" /></>),
};

const Icon = ({ n, w = 24, h, vb }: { n: string; w?: number; h?: number; vb?: string }) => (
  <svg width={w} height={h ?? w} viewBox={vb ?? '0 0 24 24'} preserveAspectRatio="none" overflow="visible">
    {icons[n]}
  </svg>
);

/* ---------- shared parts ---------- */

const Shell = styled.div`
  width: 2160px;
  height: 1399px;
  display: flex;
  flex-direction: column;
  background: #fff;
  color: #111;
  font-family: "Open Sans", "Noto Sans CJK SC", sans-serif;
  font-size: 16.4px;
  line-height: 20px;
  white-space: nowrap;
`;

const Cell = styled.div<{ $ml?: number; $w?: number }>`
  flex: none;
  display: flex;
  align-items: center;
  justify-content: center;
  margin-left: ${(p) => p.$ml ?? 0}px;
  width: ${(p) => p.$w ?? 24}px;
`;

const Words = styled(Cell)`
  justify-content: flex-start;
  padding-bottom: 1px;
`;

const Caret = styled.i<{ $color?: string; $up?: boolean; $bar?: boolean }>`
  width: 9px;
  height: 6px;
  flex: none;
  background: ${(p) => p.$color ?? '#222'};
  clip-path: ${(p) => (p.$up ? 'polygon(50% 0, 100% 100%, 0 100%)' : 'polygon(0 0, 100% 0, 50% 100%)')};
  ${(p) =>
    p.$bar &&
    css`
      height: 10px;
      width: 11px;
      clip-path: polygon(0 0, 100% 0, 100% 20%, 0 20%, 0 42%, 100% 42%, 50% 100%, 0 42%);
    `}
`;

const Rule = styled.div<{ $ml?: number; $h?: number }>`
  flex: none;
  width: 1px;
  height: ${(p) => p.$h ?? 26}px;
  margin-left: ${(p) => p.$ml ?? 0}px;
  background: #d4d4d4;
`;

type Entry = [string, number];
/* '|' is a divider, 'v' a drop-down caret, anything else an icon */
const Strip = ({ items, rule }: { items: Entry[]; rule: number }) => (
  <>
    {items.map(([n, ml], i) =>
      n === '|' ? (
        <Rule key={i} $ml={ml} $h={rule} />
      ) : n === 'v' || n === 'vg' || n === 'vb' ? (
        <Cell key={i} $ml={ml} $w={10}>
          <Caret $color={n === 'vg' ? '#999' : undefined} $bar={n === 'vb'} />
        </Cell>
      ) : (
        <Cell key={i} $ml={ml}>
          <Icon n={n} w={n === 'gF' || n === 'redfilter' ? 24 : 23} />
        </Cell>
      ),
    )}
  </>
);

/* ---------- title bar and tabs ---------- */

const TitleBar = styled.header`
  height: 38px;
  flex: none;
  display: flex;
  align-items: center;
`;
const Brand = styled.div`
  width: 57px;
  margin-left: 5px;
  font: 700 32px/36px "Open Sans", sans-serif;
  color: #7e98a8;
`;
const Title = styled.div`
  margin-left: 582px;
  padding-bottom: 2px;
  font-size: 19.3px;
`;
const Siemens = styled.div`
  margin-left: auto;
  margin-right: 41px;
  padding-top: 4px;
  font: 800 18.6px/20px "Open Sans", sans-serif;
  letter-spacing: 1.2px;
  color: #009999;
`;
const WindowKeys = styled.div`
  display: flex;
  align-items: center;
  gap: 19px;
  padding-right: 12px;
`;

const TabBar = styled.nav`
  height: 42px;
  flex: none;
  display: flex;
  background: #dadada;
  font-size: 19.5px;
`;
const FileTab = styled.div`
  width: 122px;
  margin-right: 2px;
  padding: 0 4px 3px 0;
  display: flex;
  align-items: center;
  justify-content: center;
  background: ${TEAL};
  color: #eef7fa;
`;
const Tab = styled.div<{ $active?: boolean; $w?: number }>`
  width: ${(p) => p.$w ?? 78}px;
  display: flex;
  align-items: center;
  justify-content: center;
  color: #222;
  ${(p) =>
    p.$active &&
    css`
      width: 79px;
      margin-top: 1px;
      border-top: 2px solid #a9a9a9;
      background: #fff;
      color: ${LINK};
      padding-bottom: 2px;
    `}
`;
const Search = styled.div`
  width: 188px;
  height: 30px;
  margin: 6px 16px 0 auto;
  padding: 0 2px 0 3px;
  display: flex;
  align-items: center;
  justify-content: space-between;
  border: 2px solid #b0b0b0;
  background: #fff;
  color: #9a9a9a;
  font-size: 16.3px;
`;
const TabTools = styled.div`
  display: flex;
  align-items: center;
  gap: 18px;
  padding-right: 14px;
`;

/* ---------- ribbon ---------- */

const Ribbon = styled.section`
  height: 141px;
  flex: none;
  display: flex;
  border-bottom: 2px solid #dcdcdc;
`;
const GroupRule = styled(Rule)`
  margin-top: 8px;
  height: 125px;
`;
const GroupBox = styled.div<{ $w: number }>`
  width: ${(p) => p.$w - 1}px;
  flex: none;
  display: flex;
  flex-direction: column;
`;
const GroupBody = styled.div<{ $pl: number }>`
  height: 114px;
  padding-left: ${(p) => p.$pl}px;
  display: flex;
`;
const GroupLabel = styled.div<{ $pl: number }>`
  height: 24px;
  display: flex;
  align-items: center;
  justify-content: space-between;
  padding: 0 12px 0 ${(p) => p.$pl}px;
  color: ${LINK};
`;
const Group = (p: { w: number; pl?: number; label?: string; lp?: number; caret?: boolean; last?: boolean; children?: React.ReactNode }) => (
  <>
    <GroupBox $w={p.w}>
      <GroupBody $pl={p.pl ?? 4}>{p.children}</GroupBody>
      <GroupLabel $pl={p.lp ?? 0}>
        <span>{p.label}</span>
        {p.caret !== false && <Caret />}
      </GroupLabel>
    </GroupBox>
    {!p.last && <GroupRule />}
  </>
);
const Big = styled.div<{ $w: number; $ml?: number }>`
  width: ${(p) => p.$w}px;
  margin-left: ${(p) => p.$ml ?? 0}px;
  padding-top: 9px;
  flex: none;
  display: flex;
  flex-direction: column;
  align-items: center;
  & > span { height: 20px; margin: 9px 0 9px; }
`;
const BigArt = styled.div<{ $framed?: boolean }>`
  height: 45px;
  display: flex;
  align-items: center;
  justify-content: center;
  ${(p) =>
    p.$framed &&
    css`
      width: 56px;
      height: 52px;
      margin: -2px 0 -5px;
      border: 1.5px solid #dadada;
      border-radius: 5px;
    `}
`;
const BigButton = (p: { w: number; ml?: number; n: string; iw: number; ih: number; text: string; caret?: boolean; framed?: boolean }) => (
  <Big $w={p.w} $ml={p.ml}>
    <BigArt $framed={p.framed}>
      <Icon n={p.n} w={p.iw} h={p.ih} vb={p.framed ? '0 0 24 24' : `0 0 ${p.iw} ${p.ih}`} />
    </BigArt>
    <span>{p.text}</span>
    {p.caret && <Caret />}
  </Big>
);
const Stack = styled.div<{ $w: number; $ml?: number }>`
  width: ${(p) => p.$w}px;
  margin-left: ${(p) => p.$ml ?? 0}px;
  padding-top: 2px;
  flex: none;
  display: flex;
  flex-direction: column;
`;
const Command = styled.div`
  height: 33px;
  display: flex;
  align-items: center;
  & > span { margin: 0 0 2px 7px; }
  & > i { margin-left: 11px; }
`;
const Commands = ({ w, ml, rows }: { w: number; ml?: number; rows: [string, string, boolean?][] }) => (
  <Stack $w={w} $ml={ml}>
    {rows.map(([n, t, c]) => (
      <Command key={n}>
        <Icon n={n} w={t ? 21 : 23} h={22} />
        {t && <span>{t}</span>}
        {c && <Caret />}
      </Command>
    ))}
  </Stack>
);
const Gallery = styled.div`
  width: 49px;
  height: 98px;
  margin: 8px 0 0 19px;
  padding: 6px 0 10px 7px;
  flex: none;
  display: flex;
  flex-direction: column;
  justify-content: space-between;
  border: 1.5px solid #d9d9d9;
`;
const GalleryKeys = styled.div`
  padding: 20px 0 20px 8px;
  display: flex;
  flex-direction: column;
  align-items: center;
  justify-content: space-between;
`;
const Palette = styled.div`
  padding-top: 9.5px;
`;
const PaletteRow = styled.div`
  height: 44.5px;
  display: flex;
  align-items: center;
`;
const Tiles = ({ rows, cell = 34.7, size = 22 }: { rows: string[][]; cell?: number; size?: number }) => (
  <Palette>
    {rows.map((r, i) => (
      <PaletteRow key={i}>
        {r.map((n, j) => (
          <Cell key={j} $w={n === '|' ? 9 : cell}>
            {n === '|' ? <Rule /> : <Icon n={n} w={size} h={23} />}
          </Cell>
        ))}
      </PaletteRow>
    ))}
  </Palette>
);
const AssemblyCol = styled.div`
  width: 60px;
  padding: 16px 0 16px;
  display: flex;
  flex-direction: column;
  justify-content: space-between;
`;
const AddRow = styled.div`
  display: flex;
  align-items: center;
  gap: 12px;
`;

/* ---------- selection bar ---------- */

const SelectBar = styled.section`
  height: 49px;
  flex: none;
  padding-top: 1px;
  display: flex;
  align-items: center;
  border-bottom: 2px solid #8d9a9e;
`;
const Combo = styled.div<{ $w: number; $ml: number }>`
  width: ${(p) => p.$w}px;
  height: 30px;
  margin-left: ${(p) => p.$ml}px;
  padding: 0 9px 0 3px;
  flex: none;
  display: flex;
  align-items: center;
  justify-content: space-between;
  border: 2px solid #b4b4b4;
  color: #a6a6a6;
`;
const TailCaret = styled.div`
  margin: 16px 8px 0 auto;
`;

/* ---------- workspace ---------- */

const Work = styled.main`
  height: 1099px;
  flex: none;
  display: flex;
  border-bottom: 2px solid #a9a9a9;
`;
const Rail = styled.aside`
  width: 48px;
  flex: none;
  display: flex;
  flex-direction: column;
  background: #dadada;
  border-right: 2px solid #a5a5a5;
`;
const RailItem = styled.div<{ $h: number; $active?: boolean }>`
  height: ${(p) => p.$h}px;
  display: flex;
  align-items: center;
  padding-left: 10px;
  ${(p) =>
    p.$active &&
    css`
      margin: 0 -2px 0 3px;
      padding-left: 5px;
      background: #fff;
      border: 2px solid #a5a5a5;
      border-right: 0;
    `}
`;
const RailHead = styled.div`
  height: 62px;
  padding: 8px 0 0 12px;
`;
const Navigator = styled.aside`
  width: 497px;
  flex: none;
  padding: 0 14px 0 9px;
  display: flex;
  flex-direction: column;
`;
const NavTitle = styled.div`
  height: 42px;
  padding: 0 10px 0 6px;
  display: flex;
  align-items: center;
  justify-content: space-between;
  font-size: 18px;
`;
const Maximize = styled.i`
  width: 18px;
  height: 17px;
  margin-top: 2px;
  border: 1.5px solid #222;
  border-top-width: 4px;
`;
const Table = styled.div`
  height: 931px;
  padding: 1px 1px 0;
  border: 2px solid #e2e2e2;
  font-size: 18px;
`;
const TRow = styled.div<{ $alt?: boolean; $head?: boolean }>`
  height: ${(p) => (p.$head ? 31 : 30)}px;
  display: grid;
  grid-template-columns: 299px 150px 1fr;
  overflow: hidden;
  background: ${(p) => (p.$head ? '#efefef' : p.$alt ? '#f9f9f9' : '#fff')};
  border-bottom: ${(p) => (p.$head ? '2px solid #d2d2d2' : '1.5px solid #ebebeb')};
  & > div + div { border-left: 1.5px solid ${(p) => (p.$head ? '#d2d2d2' : '#ebebeb')}; padding-left: 9px; }
`;
const TCell = styled.div<{ $pl?: number; $muted?: boolean; $bold?: boolean }>`
  display: flex;
  align-items: center;
  overflow: hidden;
  padding-left: ${(p) => p.$pl ?? 0}px;
  color: ${(p) => (p.$muted ? '#a6a6a6' : '#111')};
  font-weight: ${(p) => (p.$bold ? 700 : 400)};
  & > span { margin: 0 0 2px 5px; }
`;
const MarkCell = styled(TCell)`
  && { padding-left: 7px; }
`;
const Sorted = styled(Caret)`
  width: 15px;
  height: 8px;
  margin-left: 27px;
`;
const Expander = styled.b`
  width: 14px;
  height: 15px;
  margin-right: 6px;
  flex: none;
  border: 1.5px solid #ccc;
  background: #fff;
  font: 700 13px/11px "Open Sans", sans-serif;
  text-align: center;
`;
const CamMark = styled.div`
  padding: 0 3px 0 2px;
`;
const Branch = styled.i<{ $last?: boolean }>`
  width: 14px;
  height: 30px;
  margin-right: 4px;
  flex: none;
  background:
    repeating-linear-gradient(90deg, #999 0 1.5px, transparent 1.5px 3px) 0 50% / 14px 1px no-repeat,
    repeating-linear-gradient(0deg, #999 0 1.5px, transparent 1.5px 3px) 0 0 / 1px ${(p) => (p.$last ? '50%' : '100%')} no-repeat;
`;
const Tick = styled.div`
  width: 18px;
  height: 18px;
  margin-right: 4px;
  flex: none;
  display: flex;
  align-items: center;
  justify-content: center;
  border: 2px solid #111;
  background: #fff;
`;
const ScrollTrack = styled.div`
  height: 25px;
  padding: 11px 0 0 26px;
  background: #efefef;
`;
const Thumb = styled.div`
  width: 324px;
  height: 3px;
  border-radius: 1px;
  background: #878787;
`;
const Splitter = styled.div`
  height: 8px;
  border: 1.5px solid #aaa;
  background: #dadada;
`;
const Fold = styled.div`
  height: 36px;
  padding: 3px 8px 0 10px;
  display: flex;
  align-items: center;
  justify-content: space-between;
  border-bottom: 3px solid #d6d6d6;
  color: ${LINK};
  font-size: 21px;
  & > svg { margin-bottom: 3px; }
`;
const View = styled.section`
  flex: 1;
  display: flex;
  flex-direction: column;
  border-left: 2px solid #8f9ba0;
  border-right: 2px solid #dedede;
`;
const DocBar = styled.div`
  height: 33px;
  flex: none;
  border-bottom: 2px solid ${TEAL};
`;
const DocTab = styled.div`
  width: 146px;
  height: 33px;
  padding: 0 10px 2px 8px;
  display: flex;
  align-items: center;
  background: ${TEAL};
  color: #fff;
  font-size: 18.5px;
  & > span { margin: 0 9px 0 8px; }
  & > svg:last-child { margin-left: 8px; }
`;
const Scene = styled.svg`
  flex: none;
`;

/* ---------- dialogs: floating windows above the model ---------- */

const Dialog = styled.div`
  position: absolute;
  left: 328px;
  top: 564px;
  width: 492px;
  height: 538px;
  display: flex;
  flex-direction: column;
  overflow: hidden;
  border-radius: 18px;
  background: #f0f0f0;
  box-shadow: 0 0 0 1.5px #999, 0 1px 12px 3px rgba(0, 0, 0, 0.5);
  font-size: 18px;
`;
const DialogHead = styled.div`
  height: 36px;
  flex: none;
  padding: 0 15px 0 11px;
  display: flex;
  align-items: center;
  background: ${TEAL};
  color: #fff;
  font-size: 21px;
  & > span { margin: 0 auto 0 12px; padding-top: 3px; }
`;
const Options = styled.div`
  padding: 12px 15px 0;
  display: flex;
  flex-direction: column;
  gap: 3.5px;
`;
const Option = styled.div<{ $active?: boolean }>`
  height: 43px;
  display: flex;
  align-items: center;
  justify-content: center;
  border: 2px solid #b9b9b9;
  color: #222;
  ${(p) =>
    p.$active &&
    css`
      border-color: #afd6e0;
      background: #afd6e0;
      outline: 1.5px dotted #222;
      outline-offset: -5px;
    `}
`;
const RedFrame = styled.span`
  width: 81px;
  height: 33px;
  display: flex;
  align-items: center;
  justify-content: center;
  border: 3px solid #fa1206;
  background: #afd6e0;
  position: relative;
  z-index: 1;
`;
const Actions = styled.div`
  display: flex;
  justify-content: flex-end;
  gap: 7px;
  padding: 21px 24px 0 0;
`;
const Button = styled.div<{ $w: number; $primary?: boolean; $focus?: boolean }>`
  width: ${(p) => p.$w}px;
  height: 38px;
  display: flex;
  align-items: center;
  justify-content: center;
  border: 2px solid ${(p) => (p.$primary ? '#79b9cd' : '#b2b2b2')};
  background: ${(p) => (p.$primary ? '#72b3c8' : '#dcdcdc')};
  color: ${(p) => (p.$primary ? '#fff' : '#222')};
  ${(p) => p.$focus && 'outline: 1.5px dotted #111; outline-offset: -6px;'}
`;
const Alert = styled.div`
  position: absolute;
  left: 873px;
  top: 604px;
  width: 414px;
  height: 197px;
  background: #f0f0f0;
  border: 1px solid #a9a9a9;
  border-top: 0;
  font-size: 18px;
`;
const AlertHead = styled.div`
  height: 42px;
  margin: 0 -1px;
  padding: 3px 0 0 13px;
  display: flex;
  align-items: center;
  background: ${TEAL};
  color: #fff;
`;
const AlertBody = styled.div`
  height: 101px;
  padding: 13px 0 0 23px;
  display: flex;
  gap: 22px;
  line-height: 25.6px;
  & > svg { margin-top: 3px; }
`;
const AlertActions = styled.div`
  padding: 0 22px 0 23px;
  display: flex;
  justify-content: space-between;
`;
const Arrow = styled.svg`
  position: absolute;
  left: 600px;
  top: 720px;
`;

const Status = styled.footer`
  flex: 1;
  display: flex;
  align-items: center;
  gap: 6px;
  padding: 2px 82px 2px 998px;
  & > span { margin-right: auto; }
`;

const topItems: Entry[] = [['|', 0], ['save', 13], ['|', 10], ['undo', 9], ['vg', 11], ['redo', 7], ['|', 11], ['cut', 9], ['copy', 10], ['paste', 11], ['movebox', 10], ['|', 9], ['sync', 9], ['v', 11], ['|', 7], ['hand', 9], ['|', 9], ['switchw', 8]];
const pickItems: Entry[] = [['gA', 12], ['gB', 15], ['redfilter', 8], ['v', 9], ['gC', 13], ['gD', 12], ['gE', 14], ['gF', 12], ['v', 11], ['gG', 12], ['cubeBlue', 12], ['gH', 17], ['l1', 12], ['l2', 14], ['l3', 12], ['l4', 15], ['l5', 11], ['l6', 16], ['l7', 14], ['l8', 13], ['l9', 14], ['l10', 11], ['l11', 13], ['l12', 14], ['l13', 14], ['|', 17], ['vzoom', 18], ['vpan', 12], ['vrot', 13], ['vpen', 15], ['vsheet', 12], ['vwin', 15], ['v', 10], ['vsec', 11], ['v', 10], ['vcube', 12], ['v', 11], ['vclip', 9], ['v', 11], ['|', 14]];
const rail: [string, number, number, number, boolean?][] = [['navAsm', 64, 33, 37], ['navCon', 59, 33, 36], ['navPart', 68, 33, 37, true], ['books', 62, 35, 33], ['info', 98, 36, 37], ['page', 65, 30, 34], ['clock', 96, 34, 34], ['rainbow', 32, 30, 34], ['wandK', 94, 35, 34], ['tools', 33, 31, 36]];
const options = ['重新选择对象', '变换类型 -比例', '目标图层 -原始的', '追踪状态 -关', '细分 -1', '移动', '复制', '多个副本 -可用', '撤消上一个 -不可用'];

const BoxTick = () => (
  <Tick>
    <Icon n="check" w={17} h={16} />
  </Tick>
);

export default function App() {
  return (
    <Shell>
      <Global />
      <TitleBar>
        <Brand>NX</Brand>
        <Strip items={topItems} rule={28} />
        <Words $ml={7} $w={68}>切换窗口</Words>
        <Cell $ml={8}><Icon n="windoww" /></Cell>
        <Words $ml={7} $w={35}>窗口</Words>
        <Strip items={[['v', 2], ['vb', 6]]} rule={0} />
        <Title>NX 12 - 建模</Title>
        <Siemens>SIEMENS</Siemens>
        <WindowKeys>
          <svg width="13" height="18"><rect y="15" width="13" height="3" fill="#444" /></svg>
          <svg width="18" height="18"><path d="M5 5V1h12v9h-4M1 6h12v10H1zM1 8.500h12M5 3h12" fill="none" stroke="#444" strokeWidth="2" /></svg>
          <svg width="17" height="18"><path d="M1 1l15 16M16 1L1 17" stroke="#333" strokeWidth="2.200" /></svg>
        </WindowKeys>
      </TitleBar>

      <TabBar>
        <FileTab>文件(F)</FileTab>
        <Tab $active>主页</Tab>
        {['装配', '曲线', '分析', '视图', '渲染', '工具'].map((t) => <Tab key={t}>{t}</Tab>)}
        <Tab $w={117}>应用模块</Tab>
        <Search>查找命令<Icon n="search" w={24} h={23} /></Search>
        <TabTools>
          <Icon n="full" w={24} />
          <Icon n="up" w={22} h={22} />
          <Icon n="help" w={21} h={21} />
        </TabTools>
      </TabBar>

      <Ribbon>
        <Group w={168} pl={20} label="直接草图" lp={38}>
          <BigButton w={48} n="sketch" iw={44} ih={46} text="草图" />
          <Gallery>
            <Icon n="curveS" w={32} h={27} vb="0 0 32 27" />
            <Icon n="rectS" w={33} h={25} vb="0 0 33 25" />
          </Gallery>
          <GalleryKeys><Caret $up $color="#aaa" /><Caret /><Caret $bar /></GalleryKeys>
        </Group>
        <Group w={479} pl={20} label="特征" lp={209}>
          <Commands w={127} rows={[['plane', '基准平面', true], ['extrude', '拉伸', true], ['hole', '孔']]} />
          <Commands w={104} rows={[['pattern', '阵列特征'], ['unite', '合并', true], ['shell', '抽壳']]} />
          <BigButton w={57} n="edgeblend" iw={46} ih={46} text="边倒圆" caret />
          <Commands w={94} ml={12} rows={[['chamfer', '倒斜角'], ['trim', '修剪体'], ['draft', '拔模']]} />
          <BigButton w={58} n="moreA" iw={22} ih={20} text="更多" caret framed />
        </Group>
        <Group w={186} pl={14} label="同步建模" lp={47}>
          <BigButton w={56} n="moveface" iw={44} ih={46} text="移动面" />
          <Commands w={43} ml={11} rows={[['pullface', ''], ['offsetface', ''], ['delface', '']]} />
          <BigButton w={56} ml={-2} n="cycle" iw={22} ih={22} text="更多" caret framed />
        </Group>
        <Group w={156} label="标准化工具 - G..." lp={1}>
          <Tiles rows={[['attr', 'layers', 'layers2', '|', 'tag'], ['okA', 'okB', 'okC', '|', 'okD']]} />
        </Group>
        <Group w={78} label="齿轮..." lp={1}><Tiles rows={[['gearA', 'gearB'], ['gearC']]} /></Group>
        <Group w={87} pl={5} label="弹簧..." lp={5}><Tiles rows={[['spring', 'spring2'], ['disc', '|', 'springcut']]} /></Group>
        <Group w={78} pl={5} label="加工..." lp={1}><Tiles rows={[['mach', 'mach2'], ['mach3', 'csys']]} /></Group>
        <Group w={147} pl={5} label="建模工具 - G..." lp={6}>
          <Tiles rows={[['tri', 'sheet', 'folderA', 'folderB'], ['note', 'brush', '|', 'bino']]} />
        </Group>
        <Group w={43} label="?.." lp={1}><Tiles size={24} rows={[['cubes'], ['cubes']]} /></Group>
        <Group w={433} pl={5} label="尺寸快速格式化工具 - GC工具箱" lp={84}>
          <Tiles cell={34.6} size={24} rows={[['dimA', '|', 'x', 't1', 't2', 't3', 't4', 'xbox', 'xpar', 'h0', 'h1', 'h2', 'h3'], ['rA', 'rB', '|', 'diaA', 'diaB', 'enter']]} />
        </Group>
        <Group w={64} pl={3} caret={false}><BigButton w={56} n="surface" iw={48} ih={42} text="曲面" caret /></Group>
        <Group w={126} pl={19} label="装配" lp={33}>
          <AssemblyCol>
            <Icon n="asmBox" w={32} h={31} vb="0 0 32 31" />
            <AddRow><Icon n="asmAdd" w={32} h={31} vb="0 0 32 31" /><Caret /></AddRow>
          </AssemblyCol>
          <Commands w={28} ml={6} rows={[['mirror', ''], ['moveComp', ''], ['patComp', '']]} />
        </Group>
        <Group w={83} pl={14} label="分析" lp={10}><BigButton w={56} n="ruler" iw={44} ih={42} text="测量" /></Group>
        <Group w={33} last label="" lp={0} />
      </Ribbon>

      <SelectBar>
        <Cell $ml={16}><Icon n="menu" w={24} h={21} /></Cell>
        <Words $ml={5} $w={63}>菜单(<u>M</u>)</Words>
        <Strip items={[['v', 3], ['|', 9]]} rule={36} />
        <Combo $w={199} $ml={18}>无选择过滤器<Caret $color="#999" /></Combo>
        <Combo $w={210} $ml={13}>仅在工作部件内<Caret $color="#999" /></Combo>
        <Strip items={pickItems} rule={36} />
        <TailCaret><Caret as="div" /></TailCaret>
      </SelectBar>

      <Work>
        <Rail>
          <RailHead><Icon n="gear" w={22} h={22} /></RailHead>
          {rail.map(([n, h, w, ih, active]) => (
            <RailItem key={n} $h={h} $active={active}>
              <Icon n={n} w={w} h={ih} vb={`0 0 ${w} ${ih}`} />
            </RailItem>
          ))}
        </Rail>

        <Navigator>
          <NavTitle>部件导航器<Maximize /></NavTitle>
          <Table>
            <TRow $head>
              <TCell $pl={8}>名称<Sorted $up /></TCell>
              <TCell>最新</TCell>
              <TCell>附</TCell>
            </TRow>
            <TRow><TCell $pl={7}><Expander>+</Expander><Icon n="tView" w={24} /><span>模型视图</span></TCell><div /><div /></TRow>
            <TRow $alt><TCell $pl={7}><Expander>+</Expander><CamMark><Icon n="check" w={21} h={20} /></CamMark><Icon n="tCam" w={23} /><span>摄像机</span></TCell><div /><div /></TRow>
            <TRow><TCell $pl={7}><Expander>-</Expander><Icon n="folder" w={24} /><span>模型历史记录</span></TCell><div /><div /></TRow>
            <TRow $alt>
              <TCell $pl={42} $muted><Branch /><BoxTick /><Icon n="csys" w={23} /><span>基准坐标系 (0)</span></TCell>
              <MarkCell><Icon n="check" w={22} h={20} /></MarkCell><div />
            </TRow>
            <TRow>
              <TCell $pl={42}><Branch /><BoxTick /><Icon n="block" w={23} h={22} /><span>块 (1)</span></TCell>
              <MarkCell><Icon n="check" w={22} h={20} /></MarkCell><div />
            </TRow>
            <TRow $alt>
              <TCell $pl={42} $bold><Branch $last /><BoxTick /><Icon n="block" w={23} h={22} /><span>块 (2)</span></TCell>
              <MarkCell><Icon n="check" w={22} h={20} /></MarkCell><div />
            </TRow>
            {Array.from({ length: 23 }, (_, i) => (
              <TRow key={i} $alt={i % 2 === 1}><div /><div /><div /></TRow>
            ))}
            <ScrollTrack><Thumb /></ScrollTrack>
          </Table>
          <Splitter />
          {['相关性', '细节', '预览'].map((t) => (
            <Fold key={t}>
              {t}
              <svg width="17" height="14"><path d="M0 0h4l4.500 9L13 0h4L10 14H7z" fill={LINK} /></svg>
            </Fold>
          ))}
        </Navigator>

        <View>
          <DocBar>
            <DocTab>
              <Icon n="docPart" w={22} h={22} />
              <span>88.prt</span>
              <Icon n="docEdit" w={17} h={18} />
              <svg width="13" height="13"><path d="M1 1l11 11M12 1L1 12" stroke="#a9b4b8" strokeWidth="3.200" /></svg>
            </DocTab>
          </DocBar>
          <Scene width="1611" height="1063" viewBox="547 303 1611 1063">
            <g stroke="#4a3a12" strokeWidth="1.500" strokeLinejoin="round">
              <polygon points="1021,811 1499,667 1834,821 1355,965" fill="#ffc000" />
              <polygon points="1021,811 1355,965 1355,1211 1021,1057" fill="#b06a00" />
              <polygon points="1355,965 1834,821 1834,1064 1355,1211" fill="#d07e00" />
            </g>
            <g stroke="#f8a04a" strokeWidth="3.500" strokeLinejoin="round">
              <polygon points="1322.500,577 1545.500,682 1339.500,742 1116.500,636" fill="#ffc85a" />
              <polygon points="1116.500,636 1339.500,742 1339.500,905 1112,796" fill="#aa6d30" />
              <polygon points="1339.500,742 1545.500,682 1545.500,842 1339.500,905" fill="#c9843a" />
            </g>
            <g stroke="#999" strokeWidth="1.500" fill="#cfcfcf" strokeLinejoin="round">
              <polygon points="636,1242 660,1234 683,1245 683,1277 656,1284 636,1274" />
              <path d="M636 1242L656 1253L683 1245M656 1253V1284M660 1234V1266L683 1277M660 1266L636 1274" fill="none" />
            </g>
            <path d="M638 1273L672 1263" stroke="#a3c4a4" strokeWidth="4" />
            <path d="M668 1258L681 1261L670 1268z" fill="#9cc29e" />
            <path d="M634.500 1270V1232" stroke="#0a32c8" strokeWidth="4" />
            <path d="M634.500 1219L639 1235H630z" fill="#0a32c8" />
            <path d="M637 1276L662 1288" stroke="#c81e1e" strokeWidth="4.500" />
            <path d="M663 1282L672 1292L658 1292z" fill="#c81e1e" />
            <circle cx="634" cy="1275" r="6.500" fill="#c4c4c4" stroke="#777" />
            <circle cx="632" cy="1273" r="2.500" fill="#fff" />
            <text x="628" y="1219" fontSize="17" fill="#3355f0">Z</text>
            <text x="671" y="1301" fontSize="17" fill="#d83030">X</text>
            <text x="682" y="1266" fontSize="15" fill="#2f9a3c">Y</text>
          </Scene>
        </View>
      </Work>

      <Status>
        <span>变换</span>
        <Icon n="flag" w={24} />
        <Icon n="full" w={24} />
      </Status>

      <Dialog>
        <DialogHead>
          <Icon n="gear" w={21} h={21} />
          <span>变换</span>
          <svg width="17" height="16"><path d="M1.500 1l14 14M15.500 1l-14 14" stroke="#fff" strokeWidth="3.200" /></svg>
        </DialogHead>
        <Options>
          {options.map((t) => (
            <Option key={t} $active={t === '移动'}>{t === '移动' ? <RedFrame>{t}</RedFrame> : t}</Option>
          ))}
        </Options>
        <Actions>
          <Button $w={81} $primary>确定</Button>
          <Button $w={82}>返回</Button>
          <Button $w={81}>取消</Button>
        </Actions>
      </Dialog>

      <Alert>
        <AlertHead>变换</AlertHead>
        <AlertBody>
          <Icon n="warn" w={45} h={43} vb="0 0 45 43" />
          <div>
            不能镜像/缩放参数化的或提升的体。<br />
            选择“确定”将继续忽略体。<br />
            选择“移除参数”以移除体上的参数。
          </div>
        </AlertBody>
        <AlertActions>
          <Button $w={111} $primary $focus>确定(<u>O</u>)</Button>
          <Button $w={112}>移除参数</Button>
        </AlertActions>
      </Alert>

      <Arrow width="280" height="160" viewBox="600 720 280 160">
        <path d="M621 864L850 748" stroke="#fb1408" strokeWidth="5.500" strokeLinecap="round" />
        <path d="M861 740L838 742L847 749L848 762z" fill="#fb1408" />
      </Arrow>
    </Shell>
  );
}
